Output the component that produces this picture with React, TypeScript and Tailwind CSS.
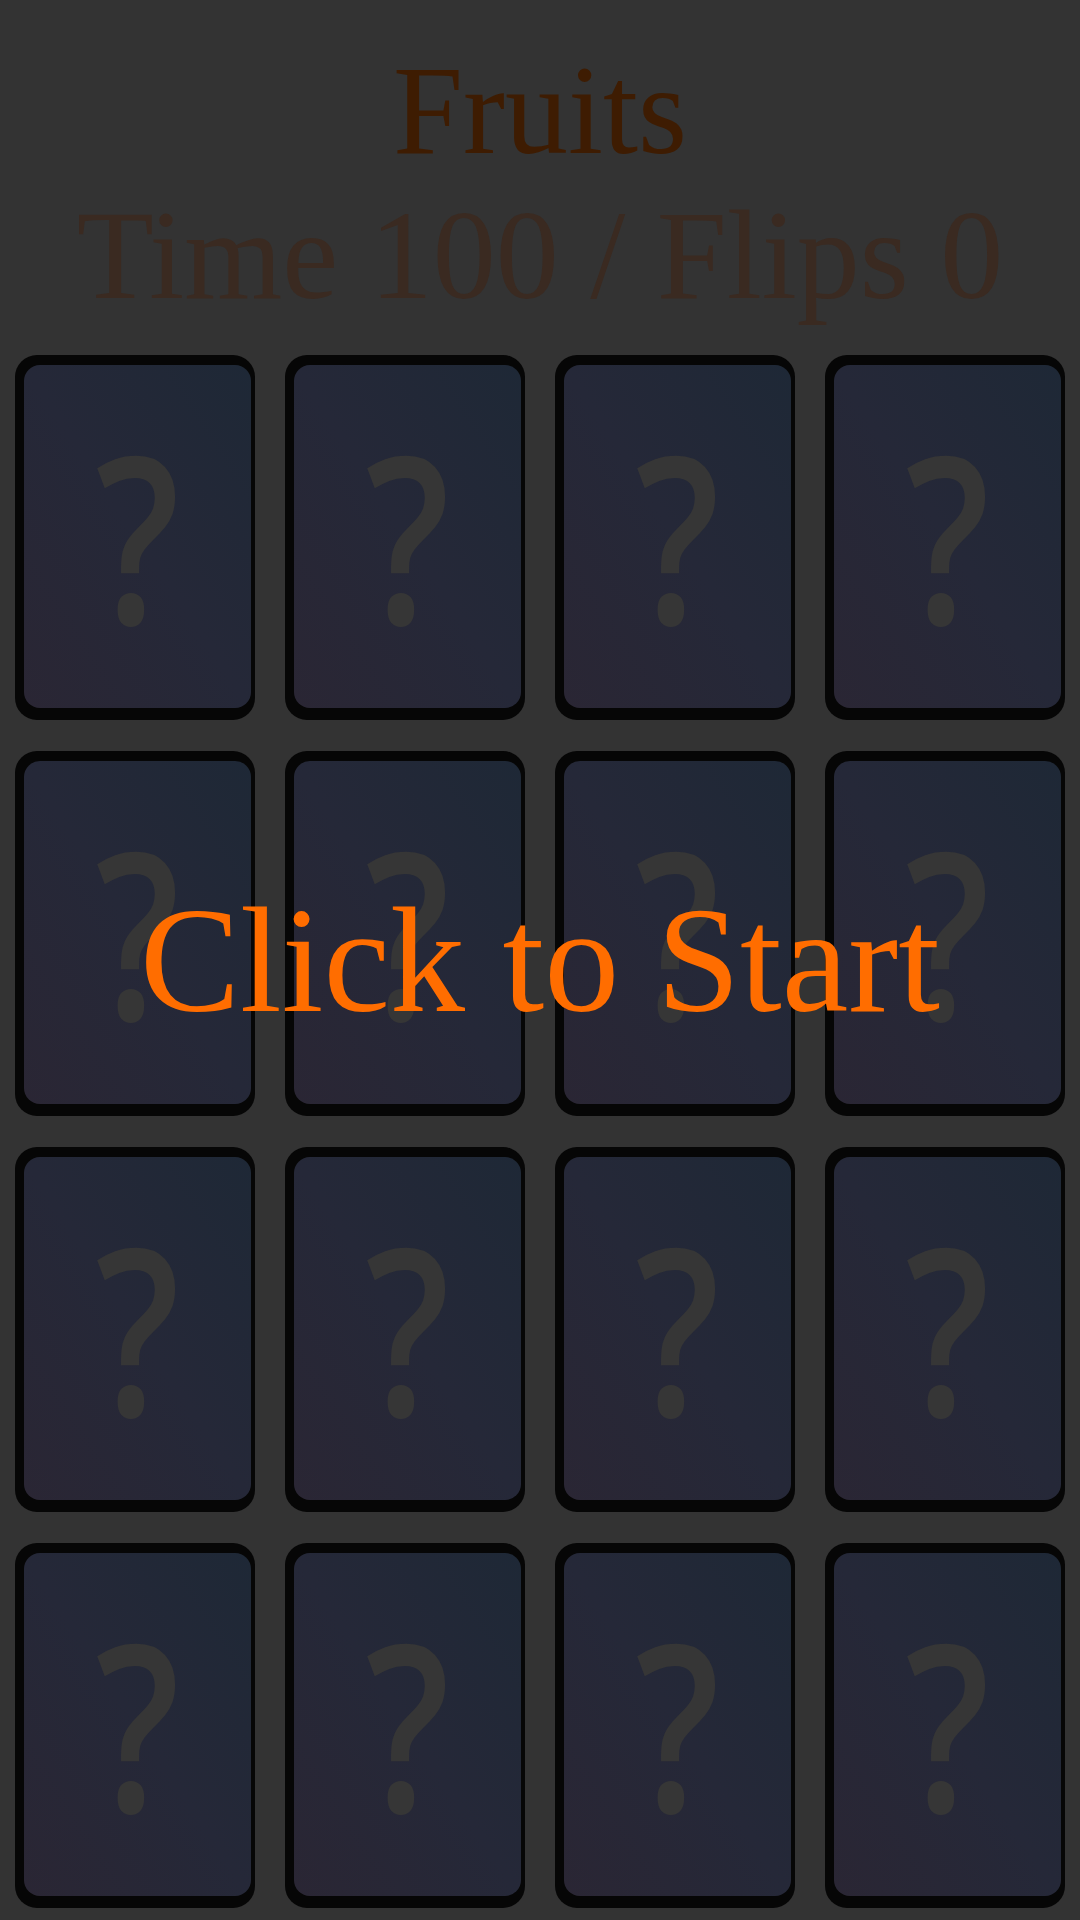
const cards = Array.from({ length: 16 }, (_, i) => i);

function CardBack() {
  return (
    <div className="h-[365px] rounded-[22px] bg-[#060606] pb-[12px] pl-[9px] pr-[4px] pt-[10px]">
      <div className="flex h-full items-center justify-center rounded-[16px] bg-linear-to-bl from-[#1e2836] via-[#252838] to-[#2a2634]">
        <span className="-translate-y-[3px] scale-x-[0.8] font-['Open_Sans',sans-serif] text-[232px] font-semibold leading-none text-[#363636]">
          ?
        </span>
      </div>
    </div>
  );
}

export default function App() {
  return (
    <div className="relative min-h-[1920px] bg-[#333333] font-['Liberation_Serif',serif]">
      <header className="pt-[38px] text-center">
        <h1 className="text-[126px] font-normal leading-[145px] text-[#3e1c02]">Fruits</h1>
        <p className="text-[126px] leading-[145px] text-[#3a2a21]">Time 100 / Flips 0</p>
      </header>

      <main className="mt-[27px] grid grid-cols-4 gap-x-[30px] gap-y-[31px] px-[15px]">
        {cards.map((i) => (
          <CardBack key={i} />
        ))}
      </main>

      {/* start overlay */}
      <div className="absolute inset-0 flex items-center justify-center">
        <span className="text-[150px] leading-[172px] text-[#ff6d00]">Click to Start</span>
      </div>
    </div>
  );
}
